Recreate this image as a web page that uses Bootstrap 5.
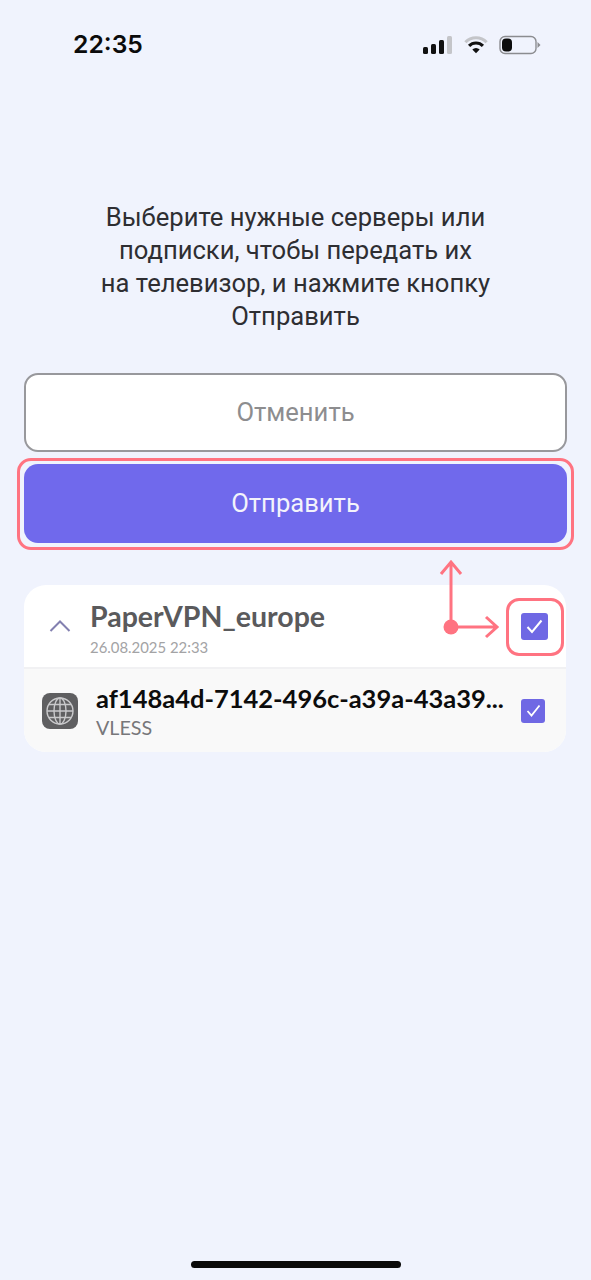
<!DOCTYPE html>
<html lang="ru">
<head>
  <meta charset="UTF-8" />
  <meta name="viewport" content="width=device-width, initial-scale=1.0"/>
  <title>Отправить на телевизор</title>
  <link href="https://cdn.jsdelivr.net/npm/bootstrap@5.3.0/dist/css/bootstrap.min.css" rel="stylesheet">
  <style>
    body {
      background-color: #f0f3fd;
      font-family: Roboto, sans-serif;
    }
    .screen {
      position: relative;
      width: 591px;
      height: 1280px;
      overflow: hidden;
    }
    .status-bar {
      height: 88px;
      padding: 2px 50px 0 73px;
    }
    .status-icons {
      gap: 12px;
    }
    .battery {
      margin-left: -1px;
    }
    .clock {
      font-family: Inter, sans-serif;
      font-weight: 600;
      font-size: 24.7px;
      color: #0b0b0b;
    }
    .hint {
      margin: 113px 0 40px;
      font-size: 25.6px;
      line-height: 33px;
      color: #2e2e32;
      text-align: center;
    }
    .actions {
      padding: 0 24px;
      gap: 12px;
    }
    .btn-cancel, .btn-send {
      height: 79px;
      border-radius: 14px;
      font-size: 25.6px;
    }
    .btn-cancel {
      background: #fff;
      border: 2px solid #98989c;
      color: #8d8d8f;
    }
    .btn-send {
      background: #7069ec;
      border: 0;
      color: #f3f3fb;
    }
    .server-card {
      margin: 42px 25px 0 24px;
      border-radius: 22px;
      overflow: hidden;
      background: #fff;
    }
    .server-head {
      height: 84px;
      border-bottom: 2px solid #f1f1f3;
      padding: 0 18px 0 25px;
      font-family: Lato, sans-serif;
    }
    .chevron {
      width: 22px;
      margin-right: 19px;
    }
    .server-title {
      font-weight: 700;
      font-size: 28.5px;
      line-height: 32px;
      color: #5a5a5c;
      margin-top: 3px;
    }
    .server-date {
      font-size: 14.9px;
      line-height: 18px;
      color: #a3a3a5;
      margin-top: 6px;
    }
    .server-item {
      height: 83px;
      background: #f9f9f9;
      padding: 0 21px 0 18px;
      font-family: Lato, sans-serif;
    }
    .globe-box {
      width: 36px;
      height: 36px;
      border-radius: 8px;
      background: #5f5f61;
      margin-right: 18px;
    }
    .item-id {
      font-weight: 700;
      font-size: 25.5px;
      line-height: 30px;
      color: #0c0c0c;
      white-space: nowrap;
      margin-top: 2px;
    }
    .item-type {
      font-size: 19.7px;
      line-height: 24px;
      color: #77777a;
      margin-top: 3px;
    }
    .check-box {
      flex: none;
      border-radius: 3px;
      background: #6f68e4;
    }
    .check-lg { width: 27px; height: 27px; }
    .check-sm { width: 24px; height: 24px; }
    .frame-send {
      position: absolute;
      left: 17px;
      top: 458px;
      width: 557px;
      height: 92px;
      border: 3px solid #ff7381;
      border-radius: 14px;
      pointer-events: none;
    }
    .frame-check {
      position: absolute;
      left: 506px;
      top: 598px;
      width: 58px;
      height: 58px;
      border: 3px solid #ff7381;
      border-radius: 13px;
      pointer-events: none;
    }
    .arrows {
      position: absolute;
      left: 435px;
      top: 556px;
      pointer-events: none;
    }
    .home-bar {
      position: absolute;
      left: 191px;
      bottom: 12px;
      width: 210px;
      height: 7px;
      border-radius: 4px;
      background: #0a0a0a;
    }
  </style>
</head>
<body class="m-0">
  <div class="screen">
    <div class="status-bar d-flex align-items-center justify-content-between">
      <span class="clock">22:35</span>
      <div class="status-icons d-flex align-items-center">
        <svg width="30" height="20" viewBox="0 0 30 20">
          <rect x="1" y="12" width="5" height="7" rx="1.5" fill="#111"/>
          <rect x="9" y="9" width="5" height="10" rx="1.5" fill="#111"/>
          <rect x="17" y="5" width="5" height="14" rx="1.5" fill="#111"/>
          <rect x="25" y="1" width="5" height="18" rx="1.5" fill="#c4c5c9"/>
        </svg>
        <svg width="24" height="20" viewBox="0 0 26 20">
          <path d="M1.5 7 A16 16 0 0 1 24.5 7" fill="none" stroke="#c4c5c9" stroke-width="3.4"/>
          <path d="M5.5 11 A10.5 10.5 0 0 1 20.5 11" fill="none" stroke="#111" stroke-width="3.4"/>
          <path d="M9 15 A5.5 5.5 0 0 1 17 15 L13 19 Z" fill="#111"/>
        </svg>
        <svg class="battery" width="42" height="20" viewBox="0 0 42 20">
          <rect x="1" y="1.5" width="36" height="17" rx="5" fill="none" stroke="#8b8c90" stroke-width="1.4"/>
          <rect x="3" y="3.5" width="10" height="13" rx="4" fill="#0c0c0c"/>
          <path d="M38.5 7 L41.5 10 L38.5 13 Z" fill="#8b8c90"/>
        </svg>
      </div>
    </div>

    <p class="hint">Выберите нужные серверы или<br>подписки, чтобы передать их<br>на телевизор, и нажмите кнопку<br>Отправить</p>

    <div class="actions d-flex flex-column">
      <button type="button" class="btn btn-cancel w-100">Отменить</button>
      <button type="button" class="btn btn-send w-100">Отправить</button>
    </div>

    <div class="server-card">
      <div class="server-head d-flex align-items-center">
        <svg class="chevron" height="14" viewBox="0 0 22 14">
          <path d="M1.5 12 L11 2.5 L20.5 12" fill="none" stroke="#8380b0" stroke-width="2"/>
        </svg>
        <div class="flex-grow-1">
          <div class="server-title">PaperVPN_europe</div>
          <div class="server-date">26.08.2025 22:33</div>
        </div>
        <div class="check-box check-lg d-flex align-items-center justify-content-center">
          <svg width="17" height="15" viewBox="0 0 17 15"><path d="M1.5 8 L6 13 L15.5 1.5" fill="none" stroke="#fff" stroke-width="2"/></svg>
        </div>
      </div>
      <div class="server-item d-flex align-items-center">
        <div class="globe-box flex-shrink-0 d-flex align-items-center justify-content-center">
          <svg width="30" height="30" viewBox="0 0 30 30" fill="none" stroke="#c9c9cb" stroke-width="1.4">
            <circle cx="15" cy="15" r="13"/>
            <ellipse cx="15" cy="15" rx="6" ry="13"/>
            <path d="M15 2 V28 M2 15 H28 M4 8.5 H26 M4 21.5 H26"/>
          </svg>
        </div>
        <div class="flex-grow-1 me-2">
          <div class="item-id">af148a4d-7142-496c-a39a-43a39...</div>
          <div class="item-type">VLESS</div>
        </div>
        <div class="check-box check-sm d-flex align-items-center justify-content-center">
          <svg width="15" height="13" viewBox="0 0 15 13"><path d="M1.5 7 L5.5 11.5 L13.5 1.5" fill="none" stroke="#fff" stroke-width="1.8"/></svg>
        </div>
      </div>
    </div>

    <div class="frame-send"></div>
    <div class="frame-check"></div>
    <svg class="arrows" width="70" height="90" viewBox="0 0 70 90" fill="none" stroke="#ff7381" stroke-width="3">
      <path d="M16 71 V6 M6 18 L16 6 L26 18"/>
      <path d="M16 71 H61 M51 61 L62 71 L51 81"/>
      <circle cx="16" cy="71" r="7.5" fill="#ff7381" stroke="none"/>
    </svg>
    <div class="home-bar"></div>
  </div>
  <script src="https://cdn.jsdelivr.net/npm/bootstrap@5.3.0/dist/js/bootstrap.bundle.min.js"></script>
</body>
</html>
